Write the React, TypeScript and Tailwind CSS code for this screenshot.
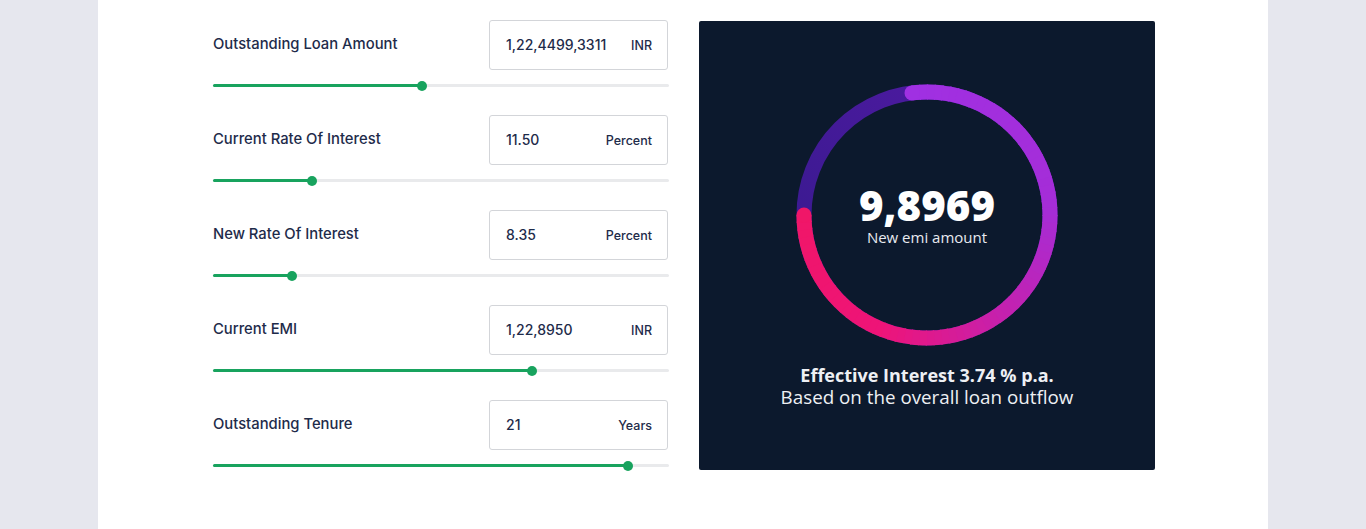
import React from "react";

interface Field {
  label: string;
  value: string;
  unit: string;
  fill: number;
}

const fields: Field[] = [
  { label: "Outstanding Loan Amount", value: "1,22,4499,3311", unit: "INR", fill: 209 },
  { label: "Current Rate Of Interest", value: "11.50", unit: "Percent", fill: 99 },
  { label: "New Rate Of Interest", value: "8.35", unit: "Percent", fill: 79 },
  { label: "Current EMI", value: "1,22,8950", unit: "INR", fill: 319 },
  { label: "Outstanding Tenure", value: "21", unit: "Years", fill: 415 },
];

// colour stops for the progress arc, from top (0) clockwise to 9 o'clock (1)
const stops: [number, number[]][] = [
  [0, [160, 48, 226]],
  [0.33, [165, 45, 215]],
  [0.55, [200, 32, 170]],
  [0.75, [238, 20, 120]],
  [1, [240, 22, 104]],
];

function colorAt(t: number) {
  for (let i = 0; i < stops.length - 1; i++) {
    const [a, ca] = stops[i];
    const [b, cb] = stops[i + 1];
    if (t >= a && t <= b) {
      const k = (t - a) / (b - a);
      const c = ca.map((v, j) => Math.round(v + (cb[j] - v) * k));
      return `rgb(${c[0]},${c[1]},${c[2]})`;
    }
  }
  return "rgb(240,22,104)";
}

function pt(cx: number, cy: number, r: number, deg: number) {
  const rad = ((deg - 90) * Math.PI) / 180;
  return [cx + r * Math.cos(rad), cy + r * Math.sin(rad)];
}

function Ring() {
  const cx = 131;
  const cy = 131;
  const r = 123;
  const start = -7;
  const end = 270;
  const n = 80;
  const segs = [];
  for (let i = 0; i < n; i++) {
    const a0 = start + ((end - start) * i) / n;
    const a1 = start + ((end - start) * (i + 1)) / n + 0.6;
    const [x0, y0] = pt(cx, cy, r, a0);
    const [x1, y1] = pt(cx, cy, r, Math.min(a1, end));
    segs.push(
      <path
        key={i}
        d={`M ${x0} ${y0} A ${r} ${r} 0 0 1 ${x1} ${y1}`}
        stroke={colorAt(i / n)}
        strokeWidth={15}
        fill="none"
      />
    );
  }
  const [sx, sy] = pt(cx, cy, r, start);
  const [ex, ey] = pt(cx, cy, r, end);
  return (
    <svg width="262" height="262" viewBox="0 0 262 262">
      <defs>
        <linearGradient id="track" x1="0" y1="1" x2="1" y2="0">
          <stop offset="0" stopColor="#351a8c" />
          <stop offset="1" stopColor="#521aa4" />
        </linearGradient>
      </defs>
      <circle cx={cx} cy={cy} r={r} stroke="url(#track)" strokeWidth={15} fill="none" />
      {segs}
      <circle cx={sx} cy={sy} r={7.5} fill={colorAt(0)} />
      <circle cx={ex} cy={ey} r={7.5} fill={colorAt(1)} />
    </svg>
  );
}

export default function App() {
  return (
    <div
      className="flex h-[529px] w-full justify-center bg-[#e6e7ee]"
      style={{ fontFamily: "'Open Sans', 'Liberation Sans', sans-serif" }}
    >
      <div className="h-full w-[1170px] bg-white">
        <div className="ml-[115px] flex w-[942px] gap-[30px] pt-[20px]">
          {/* Inputs */}
          <div className="flex w-[456px] flex-col font-['Inter',sans-serif]">
            {fields.map((f) => (
              <div key={f.label} className="flex h-[95px] flex-col">
                <div className="flex items-center justify-between">
                  <span className="mb-[1px] text-[14.8px] font-medium text-[#1e2b4a]">{f.label}</span>
                  <div className="mr-px flex h-[50px] w-[179px] items-center justify-between rounded-[3px] border border-[#d3d5d9] pl-[16px] pr-[15px]">
                    <span className="text-[14px] font-medium leading-none text-[#1e2b4a]">{f.value}</span>
                    <span className="mt-[2px] text-[12.5px] font-medium leading-none text-[#1e2b4a]">{f.unit}</span>
                  </div>
                </div>
                <div className="relative mt-[14px] h-[3px] w-full rounded-full bg-[#e9eaec]">
                  <div className="h-full rounded-full bg-[#18a35e]" style={{ width: f.fill }} />
                  <div
                    className="absolute top-[-3.5px] h-[10px] w-[10px] rounded-full bg-[#18a35e]"
                    style={{ left: f.fill - 5 }}
                  />
                </div>
              </div>
            ))}
          </div>

          {/* Result */}
          <div className="mt-px flex h-[449px] w-[456px] flex-col items-center rounded-[2px] bg-[#0c192d] pt-[63px]">
            <div className="relative">
              <Ring />
              <div className="absolute inset-0 flex flex-col items-center justify-center pb-[2px]">
                <span className="text-[42px] font-extrabold leading-[42px] text-white">9,8969</span>
                <span className="mt-[3px] text-[15px] leading-[16px] text-[#e8eaf0]">New emi amount</span>
              </div>
            </div>
            <div className="mt-[19px] text-[18px] font-bold leading-[21px] text-[#eef0f4]">
              Effective Interest 3.74 % p.a.
            </div>
            <div className="text-[18.8px] leading-[22px] text-[#eef0f4]">
              Based on the overall loan outflow
            </div>
          </div>
        </div>
      </div>
    </div>
  );
}
